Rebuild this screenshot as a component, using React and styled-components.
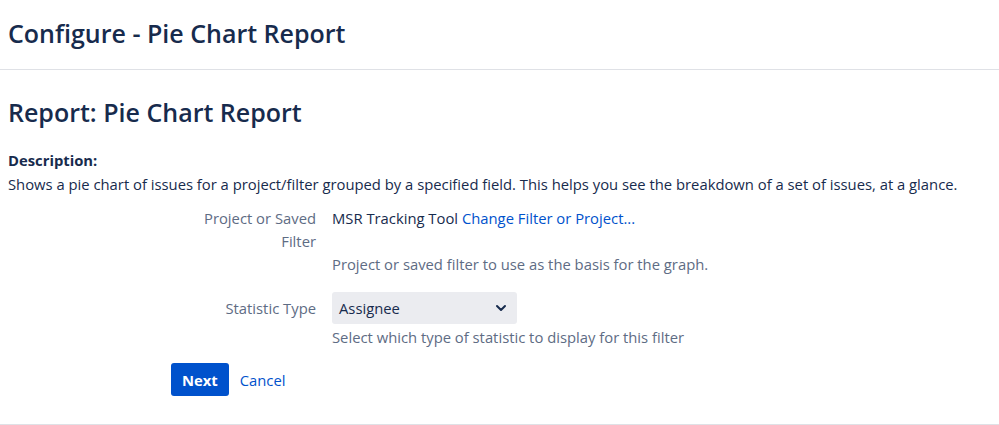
import React from "react";
import styled, { createGlobalStyle } from "styled-components";

const GlobalStyle = createGlobalStyle`
  html, body {
    margin: 0;
    padding: 0;
    background: #fff;
  }
  body {
    font-family: "Open Sans", "Noto Sans", "Liberation Sans", sans-serif;
    color: #172b4d;
  }
`;

const Page = styled.div`
  width: 999px;
  height: 425px;
  overflow: hidden;
  border-bottom: 1px solid #dfe1e6;
  box-sizing: border-box;
`;

const Header = styled.header`
  height: 70px;
  box-sizing: border-box;
  border-bottom: 1px solid #dfe1e6;
  display: flex;
  align-items: center;
  padding: 0 8px 4px;
`;

const Title = styled.h1`
  margin: 0;
  font-size: 25px;
  font-weight: 600;
  color: #172b4d;
`;

const Main = styled.main`
  padding: 23px 8px 0;
`;

const SubTitle = styled.h2`
  margin: 0;
  font-size: 25px;
  font-weight: 600;
  color: #172b4d;
  line-height: 38px;
`;

const Description = styled.div`
  margin-top: 17px;
  font-size: 14.8px;
  line-height: 24px;
`;

const Label = styled.div`
  font-weight: 700;
`;

const Form = styled.form`
  display: grid;
  grid-template-columns: 308px 1fr;
  column-gap: 16px;
  margin-top: 11px;
  font-size: 14.8px;
`;

const FieldLabel = styled.label`
  text-align: right;
  color: #5e6c84;
  line-height: ${(p) => p.$lh || 23}px;
  padding-left: 166px;
`;

const Field = styled.div`
  display: flex;
  flex-direction: column;
  margin-bottom: ${(p) => p.$gap || 0}px;
`;

const Value = styled.div`
  line-height: 23px;
  color: #172b4d;
  min-height: ${(p) => p.$min || 23}px;
`;

const Link = styled.a`
  color: #0052cc;
  text-decoration: none;
`;

const Help = styled.div`
  color: #5e6c84;
  line-height: 23px;
`;

const Select = styled.div`
  width: 185px;
  height: 32px;
  box-sizing: border-box;
  background: #ebecf0;
  border-radius: 3px;
  display: flex;
  align-items: center;
  justify-content: space-between;
  padding: 0 8px 0 7px;
  color: #172b4d;
  margin-bottom: 2px;
`;

const Buttons = styled.div`
  grid-column: 1 / 3;
  display: flex;
  align-items: center;
  gap: 3px;
  padding-left: 163px;
  margin-top: 14px;
`;

const PrimaryButton = styled.button`
  background: #0052cc;
  color: #fff;
  border: none;
  border-radius: 3px;
  height: 33px;
  padding: 0 11px;
  font-family: inherit;
  font-size: 14.8px;
  font-weight: 700;
`;

const LinkButton = styled.button`
  background: none;
  border: none;
  color: #0052cc;
  height: 33px;
  padding: 0 8px;
  font-family: inherit;
  font-size: 14.8px;
`;

const Chevron = () => (
  <svg width="16" height="16" viewBox="0 0 24 24" fill="none" stroke="#172b4d" strokeWidth="3" strokeLinecap="round" strokeLinejoin="round">
    <path d="M6 9l6 6 6-6" />
  </svg>
);

export default function App() {
  return (
    <>
      <GlobalStyle />
      <Page>
        <Header>
          <Title>Configure - Pie Chart Report</Title>
        </Header>
        <Main>
          <SubTitle>Report: Pie Chart Report</SubTitle>
          <Description>
            <Label>Description:</Label>
            Shows a pie chart of issues for a project/filter grouped by a specified field. This helps you see the breakdown of a set of issues, at a glance.
          </Description>
          <Form>
            <FieldLabel>Project or Saved Filter</FieldLabel>
            <Field $gap={16}>
              <Value $min={46}>
                MSR Tracking Tool <Link href="#">Change Filter or Project...</Link>
              </Value>
              <Help>Project or saved filter to use as the basis for the graph.</Help>
            </Field>
            <FieldLabel $lh={32}>Statistic Type</FieldLabel>
            <Field>
              <Select>
                <span>Assignee</span>
                <Chevron />
              </Select>
              <Help>Select which type of statistic to display for this filter</Help>
            </Field>
            <Buttons>
              <PrimaryButton type="button">Next</PrimaryButton>
              <LinkButton type="button">Cancel</LinkButton>
            </Buttons>
          </Form>
        </Main>
      </Page>
    </>
  );
}
